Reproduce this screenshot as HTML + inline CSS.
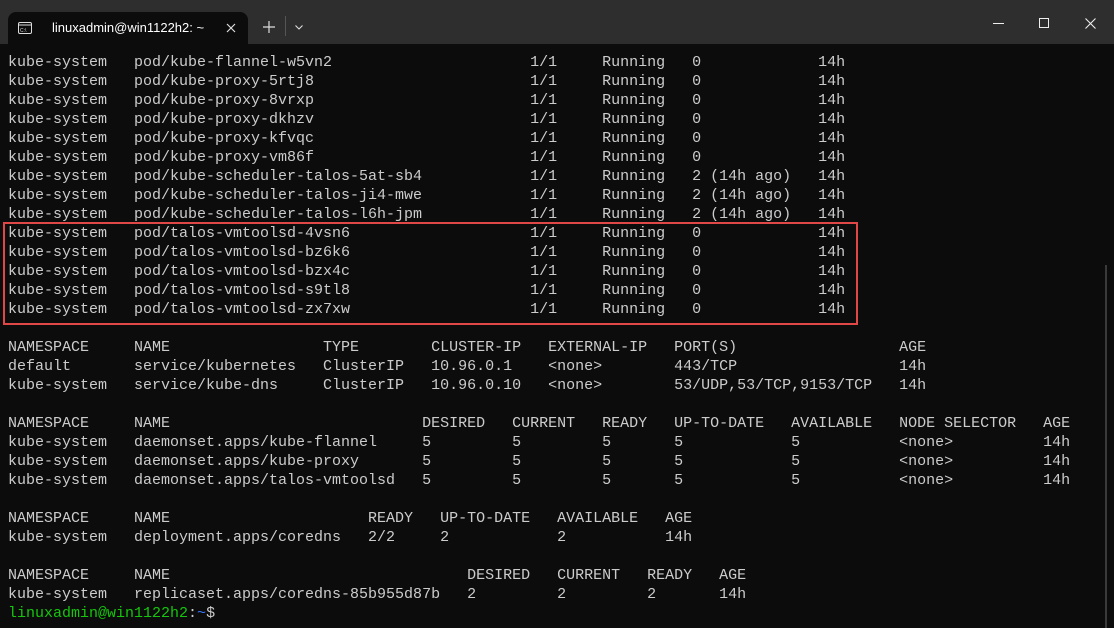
<!DOCTYPE html>
<html><head><meta charset="utf-8"><style>
*{margin:0;padding:0;box-sizing:border-box}
body{width:1114px;height:628px;background:#0c0c0c;overflow:hidden;position:relative;font-family:"Liberation Mono",monospace;font-size:15px;color:#cccccc}
.tb{position:absolute;left:0;top:0;width:1114px;height:44px;background:#2e2e2e}
.tab{position:absolute;left:8px;top:12px;width:240px;height:32px;background:#0c0c0c;border-radius:8px 8px 0 0}
.tt{position:absolute;left:44px;top:8px;font-family:"Liberation Sans",sans-serif;font-size:13px;color:#fff}
.w{position:absolute;left:0;top:1px;width:1114px;height:627px}
.r{position:absolute;left:8px;height:19px;line-height:19px;white-space:pre}
.r span{position:absolute;top:0;white-space:pre}
.box{position:absolute;left:3px;top:222px;width:855px;height:103px;border:2px solid #e04848}
.g{color:#16c60c}.b{color:#3b78ff}
</style></head><body>
<div class="tb">
 <div class="tab">
  <svg style="position:absolute;left:10px;top:10px" width="14" height="12" viewBox="0 0 14 12"><rect x="0.5" y="0.5" width="13" height="11" rx="1.5" fill="none" stroke="#ddd"/><line x1="0.5" y1="3" x2="13.5" y2="3" stroke="#ddd"/><text x="2" y="10" font-size="5" fill="#ddd" font-family="Liberation Sans">C:\</text></svg>
  <div class="tt">linuxadmin@win1122h2: ~</div>
  <svg style="position:absolute;left:218px;top:11px" width="10" height="10"><path d="M1 1L9 9M9 1L1 9" stroke="#ddd" stroke-width="1.2"/></svg>
 </div>
 <svg style="position:absolute;left:263px;top:21px" width="12" height="12"><path d="M6 0V12M0 6H12" stroke="#ddd" stroke-width="1.2"/></svg>
 <div style="position:absolute;left:285px;top:16px;width:1px;height:20px;background:#555"></div>
 <svg style="position:absolute;left:295px;top:25px" width="8" height="5"><path d="M0.5 0.5L4 4L7.5 0.5" stroke="#ddd" fill="none" stroke-width="1.1"/></svg>
 <div style="position:absolute;left:993px;top:23px;width:11px;height:1px;background:#eee"></div>
 <div style="position:absolute;left:1039px;top:18px;width:10px;height:10px;border:1px solid #eee"></div>
 <svg style="position:absolute;left:1085px;top:18px" width="11" height="11"><path d="M0.5 0.5L10.5 10.5M10.5 0.5L0.5 10.5" stroke="#eee" stroke-width="1.1"/></svg>
</div>
<div style="position:absolute;left:1105px;top:265px;width:2px;height:363px;background:#3a3a3a"></div>
<div class="box"></div>
<div class="w">
<div class="r" style="top:52px"><span style="left:0">kube-system</span><span style="left:14ch">pod/kube-flannel-w5vn2</span><span style="left:58ch">1/1</span><span style="left:66ch">Running</span><span style="left:76ch">0</span><span style="left:90ch">14h</span></div>
<div class="r" style="top:71px"><span style="left:0">kube-system</span><span style="left:14ch">pod/kube-proxy-5rtj8</span><span style="left:58ch">1/1</span><span style="left:66ch">Running</span><span style="left:76ch">0</span><span style="left:90ch">14h</span></div>
<div class="r" style="top:90px"><span style="left:0">kube-system</span><span style="left:14ch">pod/kube-proxy-8vrxp</span><span style="left:58ch">1/1</span><span style="left:66ch">Running</span><span style="left:76ch">0</span><span style="left:90ch">14h</span></div>
<div class="r" style="top:109px"><span style="left:0">kube-system</span><span style="left:14ch">pod/kube-proxy-dkhzv</span><span style="left:58ch">1/1</span><span style="left:66ch">Running</span><span style="left:76ch">0</span><span style="left:90ch">14h</span></div>
<div class="r" style="top:128px"><span style="left:0">kube-system</span><span style="left:14ch">pod/kube-proxy-kfvqc</span><span style="left:58ch">1/1</span><span style="left:66ch">Running</span><span style="left:76ch">0</span><span style="left:90ch">14h</span></div>
<div class="r" style="top:147px"><span style="left:0">kube-system</span><span style="left:14ch">pod/kube-proxy-vm86f</span><span style="left:58ch">1/1</span><span style="left:66ch">Running</span><span style="left:76ch">0</span><span style="left:90ch">14h</span></div>
<div class="r" style="top:166px"><span style="left:0">kube-system</span><span style="left:14ch">pod/kube-scheduler-talos-5at-sb4</span><span style="left:58ch">1/1</span><span style="left:66ch">Running</span><span style="left:76ch">2 (14h ago)</span><span style="left:90ch">14h</span></div>
<div class="r" style="top:185px"><span style="left:0">kube-system</span><span style="left:14ch">pod/kube-scheduler-talos-ji4-mwe</span><span style="left:58ch">1/1</span><span style="left:66ch">Running</span><span style="left:76ch">2 (14h ago)</span><span style="left:90ch">14h</span></div>
<div class="r" style="top:204px"><span style="left:0">kube-system</span><span style="left:14ch">pod/kube-scheduler-talos-l6h-jpm</span><span style="left:58ch">1/1</span><span style="left:66ch">Running</span><span style="left:76ch">2 (14h ago)</span><span style="left:90ch">14h</span></div>
<div class="r" style="top:223px"><span style="left:0">kube-system</span><span style="left:14ch">pod/talos-vmtoolsd-4vsn6</span><span style="left:58ch">1/1</span><span style="left:66ch">Running</span><span style="left:76ch">0</span><span style="left:90ch">14h</span></div>
<div class="r" style="top:242px"><span style="left:0">kube-system</span><span style="left:14ch">pod/talos-vmtoolsd-bz6k6</span><span style="left:58ch">1/1</span><span style="left:66ch">Running</span><span style="left:76ch">0</span><span style="left:90ch">14h</span></div>
<div class="r" style="top:261px"><span style="left:0">kube-system</span><span style="left:14ch">pod/talos-vmtoolsd-bzx4c</span><span style="left:58ch">1/1</span><span style="left:66ch">Running</span><span style="left:76ch">0</span><span style="left:90ch">14h</span></div>
<div class="r" style="top:280px"><span style="left:0">kube-system</span><span style="left:14ch">pod/talos-vmtoolsd-s9tl8</span><span style="left:58ch">1/1</span><span style="left:66ch">Running</span><span style="left:76ch">0</span><span style="left:90ch">14h</span></div>
<div class="r" style="top:299px"><span style="left:0">kube-system</span><span style="left:14ch">pod/talos-vmtoolsd-zx7xw</span><span style="left:58ch">1/1</span><span style="left:66ch">Running</span><span style="left:76ch">0</span><span style="left:90ch">14h</span></div>

<div class="r" style="top:337px"><span style="left:0">NAMESPACE</span><span style="left:14ch">NAME</span><span style="left:35ch">TYPE</span><span style="left:47ch">CLUSTER-IP</span><span style="left:60ch">EXTERNAL-IP</span><span style="left:74ch">PORT(S)</span><span style="left:99ch">AGE</span></div>
<div class="r" style="top:356px"><span style="left:0">default</span><span style="left:14ch">service/kubernetes</span><span style="left:35ch">ClusterIP</span><span style="left:47ch">10.96.0.1</span><span style="left:60ch">&lt;none&gt;</span><span style="left:74ch">443/TCP</span><span style="left:99ch">14h</span></div>
<div class="r" style="top:375px"><span style="left:0">kube-system</span><span style="left:14ch">service/kube-dns</span><span style="left:35ch">ClusterIP</span><span style="left:47ch">10.96.0.10</span><span style="left:60ch">&lt;none&gt;</span><span style="left:74ch">53/UDP,53/TCP,9153/TCP</span><span style="left:99ch">14h</span></div>

<div class="r" style="top:413px"><span style="left:0">NAMESPACE</span><span style="left:14ch">NAME</span><span style="left:46ch">DESIRED</span><span style="left:56ch">CURRENT</span><span style="left:66ch">READY</span><span style="left:74ch">UP-TO-DATE</span><span style="left:87ch">AVAILABLE</span><span style="left:99ch">NODE SELECTOR</span><span style="left:115ch">AGE</span></div>
<div class="r" style="top:432px"><span style="left:0">kube-system</span><span style="left:14ch">daemonset.apps/kube-flannel</span><span style="left:46ch">5</span><span style="left:56ch">5</span><span style="left:66ch">5</span><span style="left:74ch">5</span><span style="left:87ch">5</span><span style="left:99ch">&lt;none&gt;</span><span style="left:115ch">14h</span></div>
<div class="r" style="top:451px"><span style="left:0">kube-system</span><span style="left:14ch">daemonset.apps/kube-proxy</span><span style="left:46ch">5</span><span style="left:56ch">5</span><span style="left:66ch">5</span><span style="left:74ch">5</span><span style="left:87ch">5</span><span style="left:99ch">&lt;none&gt;</span><span style="left:115ch">14h</span></div>
<div class="r" style="top:470px"><span style="left:0">kube-system</span><span style="left:14ch">daemonset.apps/talos-vmtoolsd</span><span style="left:46ch">5</span><span style="left:56ch">5</span><span style="left:66ch">5</span><span style="left:74ch">5</span><span style="left:87ch">5</span><span style="left:99ch">&lt;none&gt;</span><span style="left:115ch">14h</span></div>

<div class="r" style="top:508px"><span style="left:0">NAMESPACE</span><span style="left:14ch">NAME</span><span style="left:40ch">READY</span><span style="left:48ch">UP-TO-DATE</span><span style="left:61ch">AVAILABLE</span><span style="left:73ch">AGE</span></div>
<div class="r" style="top:527px"><span style="left:0">kube-system</span><span style="left:14ch">deployment.apps/coredns</span><span style="left:40ch">2/2</span><span style="left:48ch">2</span><span style="left:61ch">2</span><span style="left:73ch">14h</span></div>

<div class="r" style="top:565px"><span style="left:0">NAMESPACE</span><span style="left:14ch">NAME</span><span style="left:51ch">DESIRED</span><span style="left:61ch">CURRENT</span><span style="left:71ch">READY</span><span style="left:79ch">AGE</span></div>
<div class="r" style="top:584px"><span style="left:0">kube-system</span><span style="left:14ch">replicaset.apps/coredns-85b955d87b</span><span style="left:51ch">2</span><span style="left:61ch">2</span><span style="left:71ch">2</span><span style="left:79ch">14h</span></div>
<div class="r" style="top:603px"><span style="left:0"><b class="g" style="font-weight:normal">linuxadmin@win1122h2</b>:<b class="b" style="font-weight:normal">~</b>$</span></div>
</div>
</body></html>
